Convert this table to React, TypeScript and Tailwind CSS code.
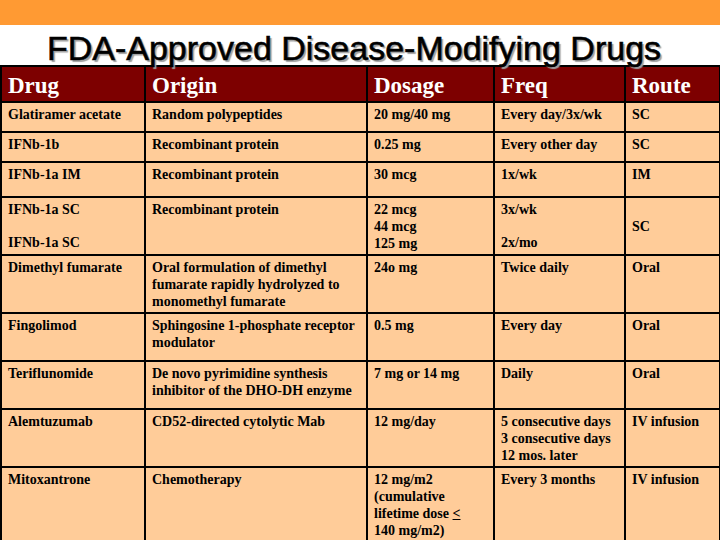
import type { ReactNode } from 'react'

interface Row {
  drug: ReactNode
  origin: ReactNode
  dosage: ReactNode
  freq: ReactNode
  route: ReactNode
  h: string
}

const rows: Row[] = [
  { drug: 'Glatiramer acetate', origin: 'Random polypeptides', dosage: '20 mg/40 mg', freq: 'Every day/3x/wk', route: 'SC', h: 'h-[30px]' },
  { drug: 'IFNb-1b', origin: 'Recombinant protein', dosage: '0.25 mg', freq: 'Every other day', route: 'SC', h: 'h-[30px]' },
  { drug: 'IFNb-1a IM', origin: 'Recombinant protein', dosage: '30 mcg', freq: '1x/wk', route: 'IM', h: 'h-[35px]' },
  {
    drug: (
      <div className="flex h-[50px] flex-col justify-between">
        <span>IFNb-1a SC</span>
        <span>IFNb-1a SC</span>
      </div>
    ),
    origin: 'Recombinant protein',
    dosage: (
      <>
        22 mcg
        <br />
        44 mcg
        <br />
        125 mg
      </>
    ),
    freq: (
      <div className="flex h-[50px] flex-col justify-between">
        <span>3x/wk</span>
        <span>2x/mo</span>
      </div>
    ),
    route: <div className="flex h-[50px] items-center">SC</div>,
    h: 'h-[58px]',
  },
  {
    drug: 'Dimethyl fumarate',
    origin: 'Oral formulation of dimethyl fumarate rapidly hydrolyzed to monomethyl fumarate',
    dosage: '24o mg',
    freq: 'Twice daily',
    route: 'Oral',
    h: 'h-[58px]',
  },
  { drug: 'Fingolimod', origin: 'Sphingosine 1-phosphate receptor modulator', dosage: '0.5 mg', freq: 'Every day', route: 'Oral', h: 'h-[48px]' },
  {
    drug: 'Teriflunomide',
    origin: 'De novo pyrimidine synthesis inhibitor of the DHO-DH enzyme',
    dosage: '7 mg or 14 mg',
    freq: 'Daily',
    route: 'Oral',
    h: 'h-[48px]',
  },
  {
    drug: 'Alemtuzumab',
    origin: 'CD52-directed cytolytic Mab',
    dosage: '12 mg/day',
    freq: (
      <>
        5 consecutive days
        <br />3 consecutive days
        <br />
        12 mos. later
      </>
    ),
    route: 'IV infusion',
    h: 'h-[58px]',
  },
  {
    drug: 'Mitoxantrone',
    origin: 'Chemotherapy',
    dosage: (
      <>
        12 mg/m2
        <br />
        (cumulative
        <br />
        lifetime dose <u>&lt;</u>
        <br />
        140 mg/m2)
      </>
    ),
    freq: 'Every 3 months',
    route: 'IV infusion',
    h: 'h-[80px]',
  },
]

const headers = ['Drug', 'Origin', 'Dosage', 'Freq', 'Route']

export default function App() {
  return (
    <div className="h-[540px] w-[720px] overflow-hidden bg-white">
      <div className="h-[25px] bg-[#ff9a33]" />
      <h1
        className="h-[40px] pr-[12px] pt-[3px] text-center text-[34px] leading-[40px] text-black [-webkit-text-stroke:0.6px_black] [text-shadow:2px_2px_1px_#a0a0a0]"
        style={{ fontFamily: '"Liberation Sans", Arial, sans-serif' }}
      >
        FDA-Approved Disease-Modifying Drugs
      </h1>
      <table
        className="w-[719px] table-fixed border-collapse bg-[#ffcc99] text-[14px] font-bold leading-[17px] text-black"
        style={{ fontFamily: '"Liberation Serif", "Times New Roman", serif' }}
      >
        <colgroup>
          <col className="w-[144px]" />
          <col className="w-[222px]" />
          <col className="w-[127px]" />
          <col className="w-[131px]" />
          <col className="w-[95px]" />
        </colgroup>
        <thead>
          <tr className="h-[36px] bg-[#7d0000]">
            {headers.map((h) => (
              <th
                key={h}
                className="border-2 border-black px-[6px] pt-[3px] text-left text-[23px] font-bold leading-[26px] text-white"
              >
                {h}
              </th>
            ))}
          </tr>
        </thead>
        <tbody>
          {rows.map((r, i) => (
            <tr key={i} className={r.h}>
              {[r.drug, r.origin, r.dosage, r.freq, r.route].map((c, j) => (
                <td key={j} className="border-2 border-black px-[6px] pt-[3px] align-top">
                  {c}
                </td>
              ))}
            </tr>
          ))}
        </tbody>
      </table>
    </div>
  )
}
